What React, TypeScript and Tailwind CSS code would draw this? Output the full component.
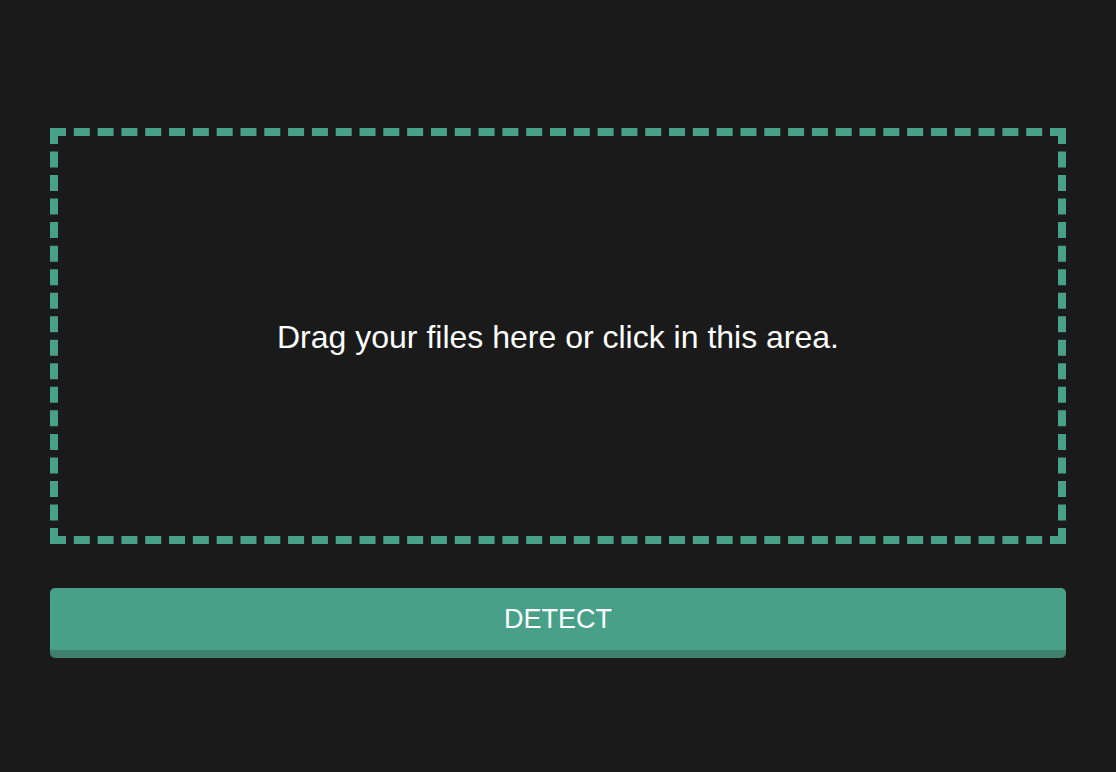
export default function App() {
  return (
    <div className="min-h-[772px] w-full bg-[#1a1a1a] px-[50px] pt-[128px]" style={{ fontFamily: '"Liberation Sans", Arial, sans-serif' }}>
      <div className="flex h-[416px] w-full items-center justify-center border-[8px] border-dashed border-[#48a088]">
        <p className="pt-[2px] text-[32px] leading-[40px] text-white">Drag your files here or click in this area.</p>
      </div>
      <button className="mt-[44px] flex h-[70px] w-full items-center justify-center rounded-[5px] border-b-[8px] border-[#3e806c] bg-[#48a088] text-[27px] text-white">
        DETECT
      </button>
    </div>
  );
}
